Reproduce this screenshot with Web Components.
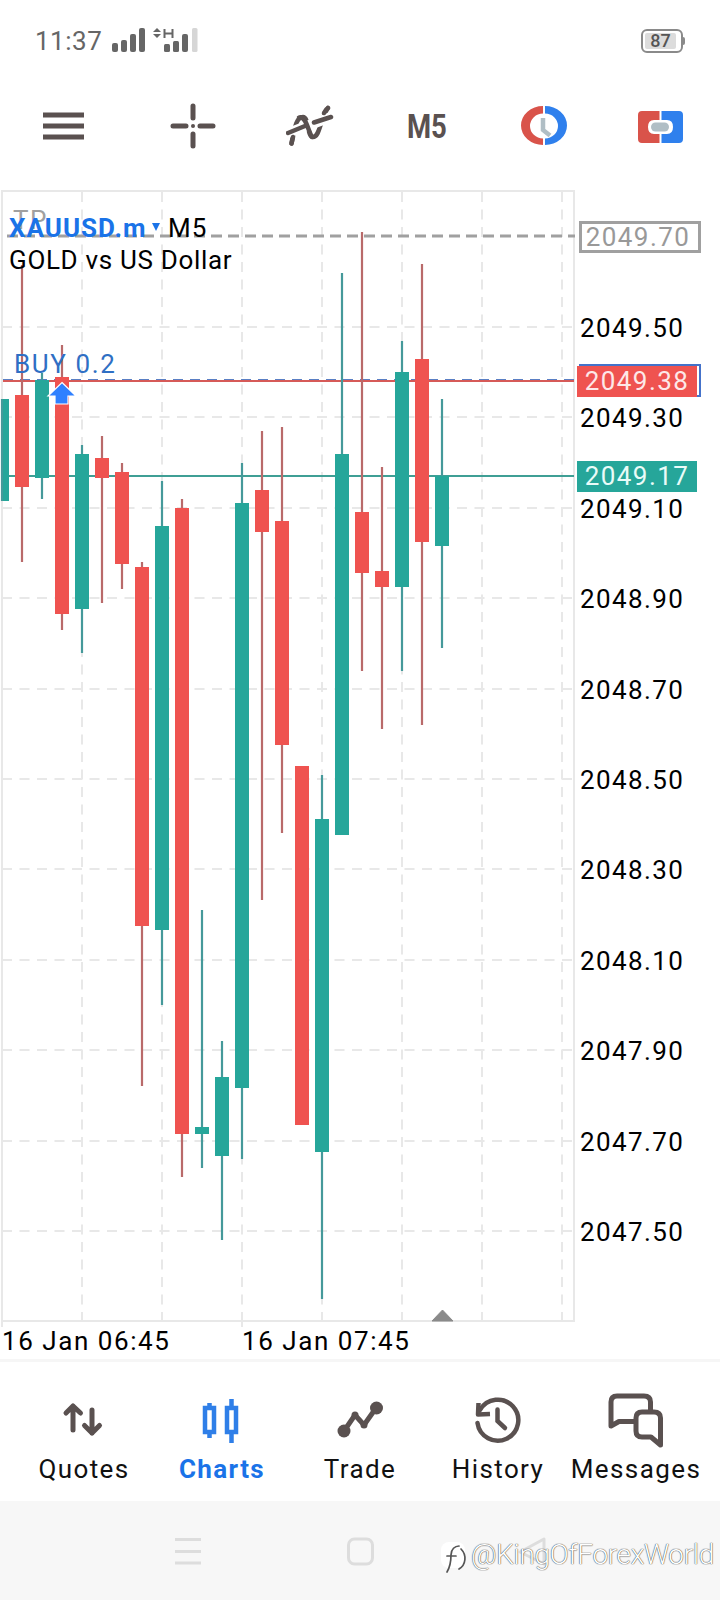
<!DOCTYPE html>
<html><head><meta charset="utf-8"><style>
html,body{margin:0;padding:0;background:#fff}
body{width:720px;height:1600px;display:flex;flex-direction:column;font-family:Roboto,"Liberation Sans",sans-serif;overflow:hidden}
tab-item svg{display:block}
</style></head><body>
<status-bar></status-bar>
<app-toolbar></app-toolbar>
<candle-chart></candle-chart>
<tab-bar>
<tab-item label="Quotes"><svg slot="icon" width="60" height="56" viewBox="54 1393 60 56"><path d="M73 1430V1406M66 1413L73 1406L80.500 1413M92 1410V1433M84.500 1425.500L92 1433L99.500 1425.500" fill="none" stroke="#5a5150" stroke-width="5" stroke-linecap="round" stroke-linejoin="round"/></svg></tab-item>
<tab-item label="Charts" active><svg slot="icon" width="60" height="56" viewBox="193 1393 60 56"><path d="M210.500 1403V1438M232.500 1399V1443" stroke="#2f7fe8" stroke-width="4.500"/><path d="M206 1408H215V1432H206ZM228 1408H237V1432H228Z" fill="#fff" stroke="#2f7fe8" stroke-width="4.500"/></svg></tab-item>
<tab-item label="Trade"><svg slot="icon" width="60" height="56" viewBox="331 1393 60 56"><path d="M345 1431L356 1415L365 1425L377 1408" fill="none" stroke="#5a5150" stroke-width="5" stroke-linejoin="round"/><circle cx="345" cy="1431" r="6.500" fill="#5a5150"/><circle cx="377.500" cy="1408" r="6.500" fill="#5a5150"/><circle cx="356" cy="1415" r="3.500" fill="#5a5150"/><circle cx="365" cy="1425" r="3.500" fill="#5a5150"/></svg></tab-item>
<tab-item label="History"><svg slot="icon" width="60" height="56" viewBox="469 1393 60 56"><path d="M481 1410A20.500 20.500 0 1 1 478.500 1423" fill="none" stroke="#5a5150" stroke-width="4.500" stroke-linecap="round"/><path d="M479.500 1403L479 1414.500L491 1414" fill="none" stroke="#5a5150" stroke-width="4.500" stroke-linejoin="round"/><path d="M498.500 1409.500V1421L506 1428" fill="none" stroke="#5a5150" stroke-width="4.500" stroke-linecap="round"/></svg></tab-item>
<tab-item label="Messages"><svg slot="icon" width="60" height="56" viewBox="607 1393 60 56"><path d="M651.500 1410V1402Q651.500 1396 645 1396H618Q612 1396 612 1402V1426L620 1421.500H636" fill="none" stroke="#5a5150" stroke-width="5" stroke-linejoin="round" stroke-linecap="round"/><path d="M643 1412H655Q661.500 1412 661.500 1418V1445L652 1437H643Q637 1437 637 1431V1418Q637 1412 643 1412Z" fill="none" stroke="#5a5150" stroke-width="5" stroke-linejoin="round"/></svg></tab-item>
</tab-bar>
<system-nav></system-nav>
<script>
function el(name,html){customElements.define(name,class extends HTMLElement{constructor(){super();this.attachShadow({mode:'open'}).innerHTML=html(this)}})}
el('status-bar',()=>`<style>:host{display:block;height:80px;position:relative;color:#666}
.row{display:flex;align-items:center;height:80px;padding-left:35px;box-sizing:border-box}
.t{font-size:26px;line-height:30px;margin-top:2px;width:73px;letter-spacing:.5px}
svg{display:block}.bat{margin-left:auto;margin-right:35px;margin-top:1px}
</style><div class="row"><span class="t">11:37</span>
<svg width="90" height="30" viewBox="108 25 90 30"><g fill="#666"><rect x="112" y="43" width="6" height="9" rx="2"/><rect x="121" y="40" width="6" height="12" rx="2"/><rect x="130" y="34" width="6" height="18" rx="2"/><rect x="139" y="28" width="6" height="24" rx="2"/>
<path d="M157 28L161 32H153ZM157 38L161 34H153Z"/><path d="M164.500 29V38M172.500 29V38M164.500 33.500H172.500" stroke="#666" stroke-width="2" fill="none"/><rect x="164" y="44" width="6" height="8" rx="1.500"/><rect x="173" y="41" width="6" height="11" rx="1.500"/><rect x="182" y="34" width="6" height="18" rx="2"/><rect x="192" y="28" width="5.500" height="24" rx="1.500" fill="#d6d6d6"/></g></svg>
<bat-icon class="bat"></bat-icon></div>`);
el('bat-icon',()=>`<style>:host{display:block;position:relative;width:44px;height:24px}
.b{position:absolute;inset:0 2px 0 0;box-sizing:border-box;border:2.500px solid #8a8a8a;border-radius:6px;padding:2px}
.f{height:100%;width:31px;background:#dcdcdc;border-radius:2px;text-align:center;font-size:18px;line-height:16px;font-weight:500;color:#555}
.n{position:absolute;right:0;top:8px;width:3px;height:8px;background:#8a8a8a;border-radius:0 2px 2px 0}</style><div class="b"><div class="f">87</div></div><div class="n"></div>`);
el('app-toolbar',()=>`<style>:host{display:block;height:92px}
.row{display:flex;align-items:center;height:92px;padding-left:43px;box-sizing:border-box;position:relative}
svg{display:block;flex:none}
.m{flex:none;width:41px;margin-left:69px;text-align:center;font-size:34px;line-height:40px;font-weight:700;color:#5a5150;transform:scaleX(.81)}
</style><div class="row">
<svg width="41" height="28" viewBox="43 112 41 28"><path d="M43 115H84M43 126H84M43 137H84" stroke="#5a5150" stroke-width="5"/></svg>
<svg style="margin-left:86px" width="46" height="46" viewBox="170 103 46 46"><path d="M173 126H186M200 126H213M193 106V118M193 134V146" stroke="#5a5150" stroke-width="5" stroke-linecap="round"/><circle cx="193" cy="126" r="2" fill="#5a5150"/></svg>
<svg style="margin-left:70px" width="48" height="44" viewBox="286 104 48 44"><path d="M291.500 143.500C295 125 297 117 303 117C309 117 307 137 313 137C320 137 320 119 328 108" fill="none" stroke="#5a5150" stroke-width="4.500" stroke-linecap="round"/><path d="M288 133L331 117" stroke="#fff" stroke-width="10"/><path d="M288 133L305 126M314 122.500L331 117" stroke="#5a5150" stroke-width="4.500" stroke-linecap="round"/><path d="M299 117.500C306 115 308 131 312 137" fill="none" stroke="#5a5150" stroke-width="4.500" stroke-linecap="round"/><path d="M324 113C325 111 326 109 328 108M293 137L291.500 143.500" fill="none" stroke="#5a5150" stroke-width="4.500" stroke-linecap="round"/></svg>
<div class="m">M5</div>
<svg style="margin-left:77px" width="46" height="42" viewBox="521 105 46 42"><path d="M543 106A22 19.500 0 0 0 543 145V138.500A13 12.500 0 0 1 543 113.500Z" fill="#d9534a"/><path d="M545 106A22 19.500 0 0 1 545 145V138.500A13 12.500 0 0 0 545 113.500Z" fill="#2f80ed"/><path d="M543 118V130L550 135.500" fill="none" stroke="#b0bec5" stroke-width="4.500"/></svg>
<svg style="margin-left:71px;margin-top:2px" width="46" height="34" viewBox="638 109 46 34"><path d="M642 110H659.500V119H654Q648 119 648 126Q648 133 654 133H659.500V142H642Q638 142 638 138V114Q638 110 642 110Z" fill="#d9534a"/><path d="M679 110H661.500V119H667Q673 119 673 126Q673 133 667 133H661.500V142H679Q683 142 683 138V114Q683 110 679 110Z" fill="#2f80ed"/><rect x="651" y="121.500" width="18" height="9" rx="4.500" fill="#b0bec5"/></svg>
</div>`);
const CANDLES=[[2,0,399,501,399,501],[22,1,395,487,265,562],[42,0,380,478,373,499],[62,1,377,614,345,630],[82,0,454,609,445,653],[102,1,458,478,436,603],[122,1,472,564,463,589],[142,1,567,926,562,1086],[162,0,526,930,481,1005],[182,1,508,1134,499,1177],[202,0,1127,1134,910,1168],[222,0,1077,1156,1041,1240],[242,0,503,1088,463,1159],[262,1,490,532,431,900],[282,1,521,745,427,833],[302,1,766,1125,766,1125],[322,0,819,1152,775,1299],[342,0,454,835,273,835],[362,1,512,573,232,671],[382,1,571,587,467,729],[402,0,372,587,341,671],[422,1,359,542,264,725],[442,0,476,546,399,648]];
const H=[327,417,508,598,689,779,869,960,1050,1141,1231];
const P=['2049.50','2049.30','2049.10','2048.90','2048.70','2048.50','2048.30','2048.10','2047.90','2047.70','2047.50'];
const T0=172;
el('candle-chart',()=>{
let s='';
for(const x of [82,162,242,322,402,482,562]) s+=`<path d="M${x} 192V1320" stroke="#e8e8e8" stroke-width="2" stroke-dasharray="10 7.500"/>`;
for(const y of H) s+=`<path d="M2 ${y}H579" stroke="#e8e8e8" stroke-width="2" stroke-dasharray="10 7.500"/>`;
s+=`<rect x="2" y="191" width="572" height="1130" fill="none" stroke="#e8e8e8" stroke-width="2"/><path d="M2 1321V1327M242 1321V1327" stroke="#e8e8e8" stroke-width="2"/>`;
s+=`<path d="M7 236H575" stroke="#a0a0a0" stroke-width="3" stroke-dasharray="11 6"/>`;
s+=`<path d="M3 379.500H574" stroke="#5a7fc4" stroke-width="1" stroke-dasharray="10 7"/><path d="M3 381H574" stroke="#d65a58" stroke-width="2"/><path d="M3 476H574" stroke="#3f9f95" stroke-width="2"/>`;
for(const [x,r,t,b,wt,wb] of CANDLES){
 const w=r?'#b96a6a':'#45999a',f=r?'#ef5350':'#26a69a';
 const x0=x===2?3:x-7,x1=x===2?9:x+7;
 if(wb>wt) s+=`<path d="M${x} ${wt}V${wb}" stroke="${w}" stroke-width="2.200"/>`;
 s+=`<rect x="${x0}" y="${t}" width="${x1-x0}" height="${b-t}" fill="${f}"/>`;
}
s+=`<path d="M62 382.500L76 396H68V404H55V396H48Z" fill="#2f80ff" stroke="#fff" stroke-width="1.200"/>`;
s+=`<path d="M442.500 1310L453 1321H432Z" fill="#8a8a8a" stroke="#8a8a8a" stroke-width="1" stroke-linejoin="round"/>`;
const lbl=(x,cy,t,c='')=>`<span class="l ${c}" style="left:${x}px;top:${cy-15-T0}px">${t}</span>`;
let h='';
h+=lbl(13,220,'TP','tp');
h+=lbl(9,228,'XAUUSD.m','sym');
h+=`<span class="tri"></span>`;
h+=lbl(168,228,'M5','m5');
h+=lbl(9,260,'GOLD vs US Dollar','gold');
h+=lbl(14,364,'BUY 0.2','buy');
H.forEach((y,i)=>h+=lbl(580,y+1,P[i]));
h+=`<span class="box tpb" style="left:579px;top:${221-T0}px">2049.70</span>`;
h+=`<span class="blue" style="left:579px;top:${364-T0}px"></span>`;
h+=`<span class="box rd" style="left:577px;top:${366-T0}px">2049.38</span>`;
h+=`<span class="box gr" style="left:577px;top:${461-T0}px">2049.17</span>`;
h+=lbl(2,1341,'16 Jan 06:45','tm');h+=lbl(242,1341,'16 Jan 07:45','tm');
return `<style>:host{display:block;height:1187px;position:relative;flex:none}
svg{position:absolute;left:0;top:0}
.l{position:absolute;font-size:26px;line-height:30px;color:#000;white-space:nowrap;letter-spacing:1.4px}
.tm{letter-spacing:1.55px}
.tp{color:#a0a0a0}.sym{color:#1a73e8;font-weight:700;letter-spacing:1px}.m5{letter-spacing:1px}.gold{letter-spacing:.67px}.buy{color:#2f6fc4;letter-spacing:1.6px}
.tri{position:absolute;left:152px;top:${223-T0}px;width:0;height:0;border:4.500px solid transparent;border-top:8px solid #1a73e8;border-bottom:0}
.box{position:absolute;box-sizing:border-box;width:120px;height:31px;font-size:26px;line-height:31px;text-align:center;letter-spacing:1.4px;white-space:nowrap}
.tpb{width:122px;height:32px;border:3px solid #a0a0a0;color:#999;line-height:27px;padding-right:4px}
.rd{background:#ef5350;color:#fde8e8}.gr{background:#26a69a;color:#e9fbf8}
.blue{position:absolute;width:122px;height:33px;box-sizing:border-box;border:2px solid #4472ca}
</style><svg width="720" height="1187" viewBox="0 172 720 1187">${s}</svg>${h}`});
el('tab-bar',()=>`<style>:host{display:block;height:142px;box-sizing:border-box;border-top:3px solid #f6f6f6;flex:none}
.g{display:grid;grid-template-columns:repeat(5,138px);padding-left:15px}</style><div class="g"><slot></slot></div>`);
customElements.define('tab-item',class extends HTMLElement{constructor(){super();const r=this.attachShadow({mode:'open'});const a=this.hasAttribute('active');const lab=this.getAttribute('label');
r.innerHTML=`<style>:host{display:flex;flex-direction:column;align-items:center;height:139px;box-sizing:border-box;padding-top:31px}
.t{font-size:26px;line-height:30px;margin-top:5px;letter-spacing:1.4px;white-space:nowrap;color:${a?'#1a73e8':'#111'};font-weight:${a?700:400}}</style>
<slot name="icon"></slot><span class="t">${lab}</span>`}});
el('system-nav',()=>`<style>:host{display:block;height:99px;background:#f7f7f7;position:relative;flex:none}
svg.n{display:block;position:absolute;left:0;top:0}
.wm{position:absolute;left:471px;top:37px;font-size:28px;line-height:34px;font-weight:300;color:#fff;letter-spacing:-.35px;white-space:nowrap;text-shadow:0 0 1px #333,0 0 1px #555}
.lg{position:absolute;left:438px;top:35px}
</style><svg class="n" width="720" height="99" viewBox="0 1501 720 99"><path d="M175 1539.500H201M175 1551.500H201M175 1563H201" stroke="#ddd" stroke-width="3"/><rect x="348.500" y="1539" width="24" height="25" rx="6" fill="none" stroke="#ddd" stroke-width="3"/><path d="M544 1539V1564L520 1552Z" fill="none" stroke="#ddd" stroke-width="3" stroke-linejoin="round"/></svg>
<svg class="lg" width="34" height="40" viewBox="0 0 34 40"><rect x="3" y="6" width="24" height="26" rx="8" fill="#fff"/><path d="M9 36C12 31 13 25 13 19C13 13 17 10 21 10M9 20H18M23 13C29 19 28 29 21 33" fill="none" stroke="#555" stroke-width="1.700" stroke-linecap="round"/></svg>
<span class="wm">@KingOfForexWorld</span>`);
</script></body></html>
